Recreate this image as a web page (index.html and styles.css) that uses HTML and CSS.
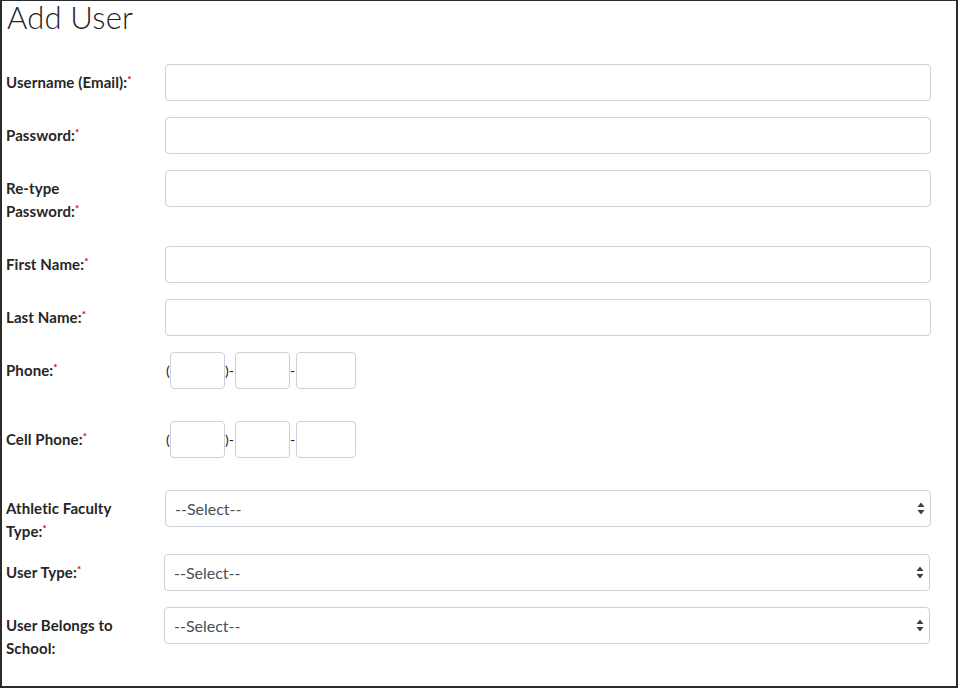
FILE: index.html
```html
<!DOCTYPE html>
<html>
<head>
<meta charset="utf-8">
<title>Add User</title>
<link rel="stylesheet" href="styles.css">
</head>
<body>
<div class="page">
  <h1 class="title">Add User</h1>
  <form class="form">
    <div class="row">
      <label class="lbl">Username (Email):<span class="req">*</span></label>
      <div class="ctl"><input class="input" type="text"></div>
    </div>
    <div class="row">
      <label class="lbl">Password:<span class="req">*</span></label>
      <div class="ctl"><input class="input" type="password"></div>
    </div>
    <div class="row">
      <label class="lbl">Re-type<br>Password:<span class="req">*</span></label>
      <div class="ctl"><input class="input" type="password"></div>
    </div>
    <div class="row">
      <label class="lbl">First Name:<span class="req">*</span></label>
      <div class="ctl"><input class="input" type="text"></div>
    </div>
    <div class="row">
      <label class="lbl">Last Name:<span class="req">*</span></label>
      <div class="ctl"><input class="input" type="text"></div>
    </div>
    <div class="row row-phone">
      <label class="lbl">Phone:<span class="req">*</span></label>
      <div class="ctl phone">
        <span class="sep sep-open">(</span><input class="input pa" type="text"><span class="sep sep-close">)-</span><input class="input pb" type="text"><span class="sep sep-dash">-</span><input class="input pc" type="text">
      </div>
    </div>
    <div class="row row-phone">
      <label class="lbl">Cell Phone:<span class="req">*</span></label>
      <div class="ctl phone">
        <span class="sep sep-open">(</span><input class="input pa" type="text"><span class="sep sep-close">)-</span><input class="input pb" type="text"><span class="sep sep-dash">-</span><input class="input pc" type="text">
      </div>
    </div>
    <div class="row row-tight">
      <label class="lbl">Athletic Faculty<br>Type:<span class="req">*</span></label>
      <div class="ctl">
        <div class="sel-wrap">
          <select class="select"><option>--Select--</option></select>
          <svg class="arrows" width="8" height="13" viewBox="0 0 8 13"><path d="M4 0.5 L7.5 5 L0.5 5 Z" fill="#3a3f47"/><path d="M0.5 8 L7.5 8 L4 12.5 Z" fill="#3a3f47"/></svg>
        </div>
      </div>
    </div>
    <div class="row">
      <label class="lbl">User Type:<span class="req">*</span></label>
      <div class="ctl shift">
        <div class="sel-wrap">
          <select class="select"><option>--Select--</option></select>
          <svg class="arrows" width="8" height="13" viewBox="0 0 8 13"><path d="M4 0.5 L7.5 5 L0.5 5 Z" fill="#3a3f47"/><path d="M0.5 8 L7.5 8 L4 12.5 Z" fill="#3a3f47"/></svg>
        </div>
      </div>
    </div>
    <div class="row">
      <label class="lbl">User Belongs to<br>School:</label>
      <div class="ctl shift">
        <div class="sel-wrap">
          <select class="select"><option>--Select--</option></select>
          <svg class="arrows" width="8" height="13" viewBox="0 0 8 13"><path d="M4 0.5 L7.5 5 L0.5 5 Z" fill="#3a3f47"/><path d="M0.5 8 L7.5 8 L4 12.5 Z" fill="#3a3f47"/></svg>
        </div>
      </div>
    </div>
  </form>
</div>
</body>
</html>
```
FILE: styles.css
```css
html, body {
  margin: 0;
  padding: 0;
  background: #fff;
}
body {
  font-family: "Lato", "Liberation Sans", sans-serif;
  color: #222;
}
.page {
  box-sizing: border-box;
  width: 958px;
  height: 688px;
  border-top: 1px solid #2b2b2b;
  border-left: 2px solid #2b2b2b;
  border-right: 2px solid #2b2b2b;
  border-bottom: 2px solid #2b2b2b;
  padding: 0 25px 0 4px;
  overflow: hidden;
}
.title {
  margin: 0 0 31px 1px;
  font-size: 31px;
  line-height: 32px;
  font-weight: 300;
  letter-spacing: 0.2px;
  color: #222;
}
.form {
  display: flex;
  flex-direction: column;
}
.row {
  display: flex;
  align-items: flex-start;
  margin-bottom: 16px;
}
.row-phone {
  margin-bottom: 32px;
}
.row-tight {
  margin-bottom: 4px;
}
.lbl {
  box-sizing: border-box;
  width: 159px;
  flex: none;
  padding: 7px 0;
  font-size: 15px;
  line-height: 23px;
  font-weight: 700;
  letter-spacing: 0.1px;
  white-space: nowrap;
  color: #262626;
}
.req {
  color: #e00000;
  font-size: 10px;
  line-height: 0;
  vertical-align: 5px;
}
.ctl {
  flex: 1;
  display: flex;
}
.ctl.shift {
  margin-left: -1px;
  margin-right: 1px;
}
.input {
  box-sizing: border-box;
  width: 100%;
  height: 37px;
  border: 1px solid #ccd1d9;
  border-radius: 4px;
  background: #fff;
  margin: 0;
  padding: 0 10px;
  font-family: inherit;
  font-size: 15px;
  color: #495057;
  outline: none;
}
.phone {
  align-items: center;
}
.sep {
  flex: none;
  font-size: 14px;
  line-height: 37px;
  color: #222;
  overflow: visible;
  white-space: nowrap;
}
.sep-open { width: 5px; margin-left: 1px; margin-right: -1px; }
.sep-close { width: 10px; }
.sep-dash { width: 6px; }
.input.pa, .input.pb { width: 55px; flex: none; padding: 0 4px; }
.input.pc { width: 60px; flex: none; padding: 0 4px; }
.sel-wrap {
  position: relative;
  width: 100%;
}
.select {
  -webkit-appearance: none;
  appearance: none;
  box-sizing: border-box;
  width: 100%;
  height: 37px;
  border: 1px solid #ccd1d9;
  border-radius: 4px;
  background: #fff;
  margin: 0;
  padding: 0 24px 0 9px;
  font-family: inherit;
  font-size: 16px;
  color: #495057;
  outline: none;
}
.arrows {
  position: absolute;
  right: 6px;
  top: 12px;
  pointer-events: none;
}
```
